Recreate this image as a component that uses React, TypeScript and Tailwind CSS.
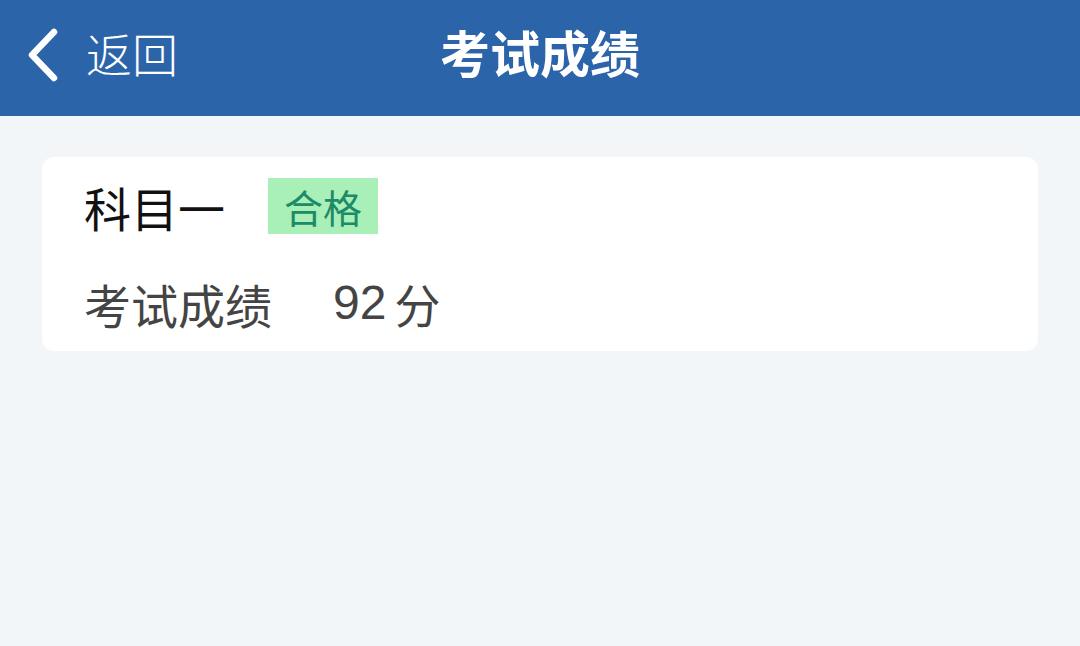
export default function App() {
  return (
    <div className="w-[1080px] h-[646px] bg-[#f3f6f9] flex flex-col" style={{ fontFamily: '"Noto Sans CJK SC", "Noto Sans", sans-serif' }}>
      <div className="h-[116px] bg-[#2c64a9] relative flex items-center">
        <div className="flex items-center pl-[26px] gap-[26px]">
          <svg width="34" height="54" viewBox="0 0 34 54" fill="none" className="mb-[6px]">
            <path d="M28 4 L6 27 L28 50" stroke="white" strokeWidth="6.5" strokeLinecap="round" strokeLinejoin="round" />
          </svg>
          <span className="text-white text-[46px] leading-none font-light pb-[12px]">返回</span>
        </div>
        <div className="absolute inset-0 flex items-center justify-center pointer-events-none pb-[14px]">
          <span className="text-white text-[50px] leading-none font-bold">考试成绩</span>
        </div>
      </div>
      <div className="px-[42px] pt-[41px]">
        <div className="bg-white rounded-[12px] h-[194px] pl-[42px] pt-[21px]">
          <div className="flex items-center h-[56px]">
            <span className="text-[#111] text-[47px] leading-none">科目一</span>
            <span className="ml-[43px] bg-[#a8f0b8] text-[#1d8a68] text-[39px] leading-none h-[56px] px-[16px] flex items-center">合格</span>
          </div>
          <div className="flex items-center mt-[45px]">
            <span className="text-[#444] text-[47px] leading-none w-[249px]">考试成绩</span>
            <span className="text-[#444] text-[48px] leading-none" style={{ fontFamily: '"Liberation Sans", Arial, sans-serif' }}>92</span>
            <span className="text-[#444] text-[46px] leading-none ml-[8px]">分</span>
          </div>
        </div>
      </div>
    </div>
  )
}
